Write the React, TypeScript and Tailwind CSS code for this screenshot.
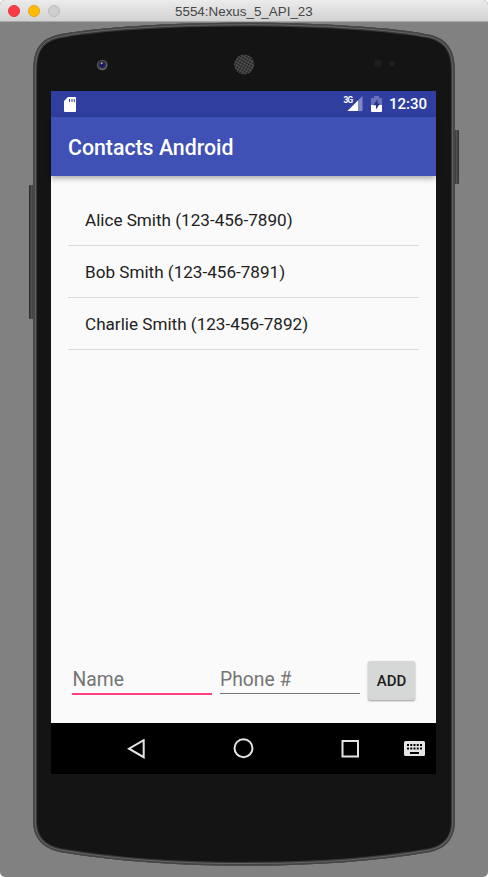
import React from "react";

const contacts = [
  "Alice Smith (123-456-7890)",
  "Bob Smith (123-456-7891)",
  "Charlie Smith (123-456-7892)",
];

const BODY =
  "M33.3 70 C33.3 50 40 39.5 57 35 C95 27 170 22.7 244 22.7 C318 22.7 393 27 431 35 C447 39.5 454.7 50 454.7 70 L454.7 822 C454.7 838 446 848.5 430 852 C370 862.5 304 865.7 244 865.7 C184 865.7 118 862 60 852 C43 848.5 33.3 838 33.3 822 Z";

function DeviceShell() {
  return (
    <svg className="absolute left-0 top-0" width="488" height="877" viewBox="0 0 488 877" aria-hidden="true">
      <defs>
        <linearGradient id="key" x1="0" x2="1" y1="0" y2="0">
          <stop offset="0" stopColor="#232323" />
          <stop offset=".5" stopColor="#515153" />
          <stop offset="1" stopColor="#303030" />
        </linearGradient>
        <pattern id="mesh" width="2.8" height="2.8" patternUnits="userSpaceOnUse" patternTransform="rotate(30)">
          <rect width="2.8" height="2.8" fill="#626262" />
          <circle cx="1.4" cy="1.4" r="1.1" fill="#191919" />
        </pattern>
        <clipPath id="body"><path d={BODY} /></clipPath>
      </defs>
      <rect x="29" y="185" width="5" height="134" rx="1" fill="url(#key)" />
      <rect x="454" y="130" width="5" height="54" rx="1" fill="url(#key)" />
      <g clipPath="url(#body)">
        <path d={BODY} fill="#141414" stroke="#39393a" strokeWidth="7.6" />
        <path d={BODY} fill="none" stroke="#626365" strokeWidth="5.2" />
        <path d={BODY} fill="none" stroke="#434446" strokeWidth="3.2" />
      </g>
      <circle cx="102.3" cy="65" r="5.3" fill="#5f6062" />
      <circle cx="102" cy="64.5" r="4" fill="#333337" />
      <circle cx="102.3" cy="65" r="2.4" fill="#17176e" />
      <circle cx="101.7" cy="63.2" r="1" fill="#aaaec2" />
      <circle cx="244.2" cy="64.5" r="10" fill="url(#mesh)" />
      <circle cx="378" cy="63.5" r="4" fill="#211d1e" />
      <circle cx="392" cy="63.5" r="2.7" fill="#222022" />
    </svg>
  );
}

function TitleBar() {
  return (
    <header className="relative flex h-[22px] shrink-0 items-center rounded-t-[5px] border-b border-[#a9a9a9] bg-linear-to-b from-[#ececec] to-[#d2d2d2] pl-2">
      <div className="flex gap-2">
        <i className="size-3 rounded-full border border-[#e8323c] bg-[#fc3d47]" />
        <i className="size-3 rounded-full border border-[#e6a510] bg-[#fdba08]" />
        <i className="size-3 rounded-full border border-[#b9b9b9] bg-[#cecece]" />
      </div>
      <h1 className="ml-[115px] pt-[3px] font-['Liberation_Sans',sans-serif] text-[13.4px] leading-none whitespace-nowrap text-[#464646]">5554:Nexus_5_API_23</h1>
    </header>
  );
}

function StatusBar() {
  return (
    <div className="flex h-[26px] shrink-0 items-center bg-[#303f9f] pr-[9px] pl-[13px] text-white">
      <svg width="12" height="15" viewBox="0 0 12 15">
        <path d="M4 0 H11 Q12 0 12 1 V14 Q12 15 11 15 H1 Q0 15 0 14 V4 Z" fill="white" />
        <path d="M5.5 2v3M8 2v3M10.3 2v3" stroke="#303f9f" strokeWidth="1" />
      </svg>
      <svg className="ml-auto" width="20" height="16" viewBox="0 0 20 16">
        <path d="M19.5 0V15H4.5Z" fill="#8089c5" />
        <path d="M15 4.5V15H4.5Z" fill="white" />
        <text x="0.5" y="7" fill="white" fontFamily="Roboto" fontSize="8.2" fontWeight="700" textLength="9.5">3G</text>
      </svg>
      <svg className="ml-2" width="11" height="16" viewBox="0 0 11 16">
        <path d="M3 0H8V2H11V16H0V2H3Z" fill="#6872b8" />
        <path d="M0 9H11V15Q11 16 10 16H1Q0 16 0 15Z" fill="white" />
        <path d="M6.5 3 2.4 9.3H5V13.5L9 7.5H6.5Z" fill="#26348c" />
      </svg>
      <span className="ml-[7px] pt-px text-[15px] leading-none font-medium">12:30</span>
    </div>
  );
}

function Navigation() {
  return (
    <nav className="flex h-[51px] shrink-0 items-center bg-black pr-[11px] pl-[76px]">
      <svg width="18" height="20" viewBox="0 0 18 20"><path d="M16.7 1.2V18.2L2 9.7Z" fill="none" stroke="#e5e5e5" strokeWidth="2" /></svg>
      <svg className="ml-[88px]" width="21" height="21" viewBox="0 0 21 21"><circle cx="10.5" cy="10.2" r="9" fill="none" stroke="#e5e5e5" strokeWidth="2" /></svg>
      <svg className="ml-[87px]" width="18" height="18" viewBox="0 0 18 18"><rect x="1.5" y="1" width="15.5" height="15.5" fill="none" stroke="#e5e5e5" strokeWidth="2" /></svg>
      <svg className="ml-auto" width="21" height="15" viewBox="0 0 21 15">
        <rect width="21" height="15" rx="1.5" fill="#e5e5e5" />
        <path d="M3 4H18M3 7.5H18" stroke="black" strokeWidth="2" strokeDasharray="2 1.25" />
        <path d="M6 12H15" stroke="black" strokeWidth="2" />
      </svg>
    </nav>
  );
}

export default function App() {
  return (
    <div className="h-[877px] w-[488px] overflow-hidden bg-white">
      <div className="relative flex h-full flex-col overflow-hidden rounded-[5px] bg-[#818181]">
        <DeviceShell />
        <TitleBar />
        <main className="relative mt-[69px] ml-[51px] flex h-[683px] w-[385px] flex-col bg-[#fafafa] font-['Roboto',sans-serif]">
          <StatusBar />
          <div className="flex h-[59px] shrink-0 items-center bg-[#3f51b5] pt-[3px] pl-[17px] text-[21.3px] font-medium text-white shadow-[0_2px_6px_rgba(0,0,0,0.36)]">Contacts Android</div>
          <ul className="mx-[17px] mt-[18px] text-[17.1px] text-[#212121]">
            {contacts.map((contact) => (
              <li key={contact} className="flex h-[52px] items-center border-b border-[#dadada] pt-[2px] pl-[17px]">{contact}</li>
            ))}
          </ul>
          <form className="mt-auto mb-[23px] flex h-[39px] items-start gap-2 px-[21px] text-[19.3px]" onSubmit={(e) => e.preventDefault()}>
            <input aria-label="Name" placeholder="Name" className="h-[34px] w-[140px] min-w-0 border-b-2 border-[#ff4081] bg-transparent pt-[4px] pl-[0.5px] outline-none placeholder:text-[#757575]" />
            <input aria-label="Phone number" placeholder="Phone #" className="h-[33px] w-[140px] min-w-0 border-b border-[#757575] bg-transparent pt-[4px] outline-none placeholder:text-[#757575]" />
            <button className="h-[39px] w-[47px] shrink-0 rounded-[2px] bg-[#d6d7d7] pt-px text-[15px] font-medium text-[#1d1d1d] shadow-[0_1px_2px_rgba(0,0,0,0.38)]">ADD</button>
          </form>
          <Navigation />
        </main>
      </div>
    </div>
  );
}
